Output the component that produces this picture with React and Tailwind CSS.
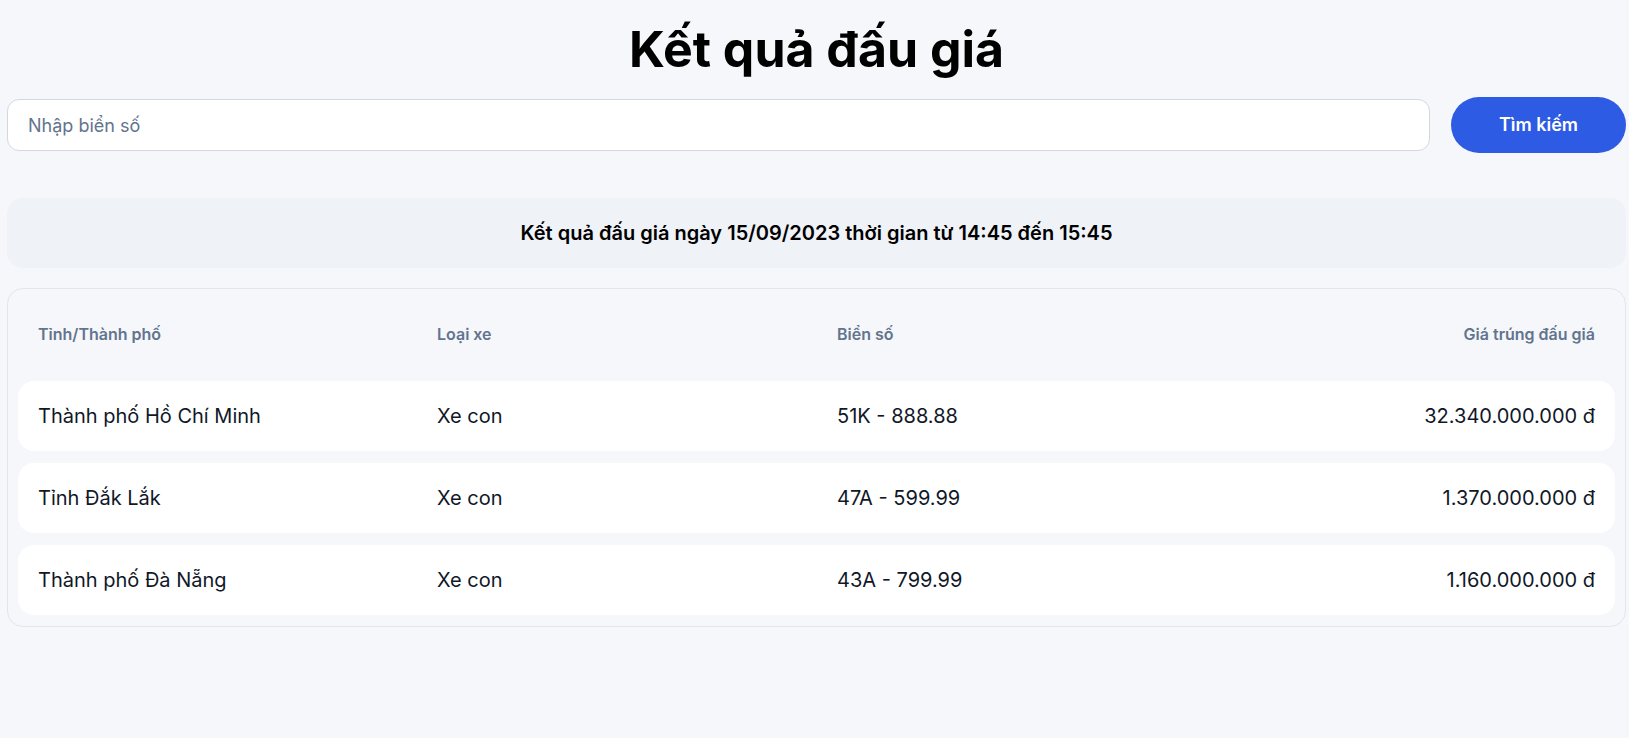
import React from 'react';

const rows = [
	{ city: 'Thành phố Hồ Chí Minh', type: 'Xe con', plate: '51K - 888.88', price: '32.340.000.000 đ' },
	{ city: 'Tỉnh Đắk Lắk', type: 'Xe con', plate: '47A - 599.99', price: '1.370.000.000 đ' },
	{ city: 'Thành phố Đà Nẵng', type: 'Xe con', plate: '43A - 799.99', price: '1.160.000.000 đ' },
];

function Row( { cells, header } ) {
	return (
		<div
			className={
				header
					? 'grid grid-cols-[399px_400px_1fr_1fr] items-center h-[70px] px-5 text-base font-semibold text-slate-500'
					: 'grid grid-cols-[399px_400px_1fr_1fr] items-center h-[70px] px-5 rounded-2xl bg-white text-xl text-gray-900'
			}
		>
			<div>{ cells[ 0 ] }</div>
			<div>{ cells[ 1 ] }</div>
			<div>{ cells[ 2 ] }</div>
			<div className="text-right">{ cells[ 3 ] }</div>
		</div>
	);
}

export default function App() {
	return (
		<div className="min-h-screen bg-[#f6f7fb] pl-[7px] pr-[3px] pt-[24px] pb-10 font-['Inter',sans-serif] text-black">
			<h1 className="text-center text-[50px] font-bold leading-none">Kết quả đấu giá</h1>

			<div className="mt-[23px] flex items-center gap-[21px]">
				<input
					type="text"
					placeholder="Nhập biển số"
					className="h-[52px] flex-1 rounded-xl border border-[#d4d7e0] bg-white px-5 text-lg text-gray-900 outline-none placeholder:text-slate-500"
				/>
				<button className="h-14 w-[175px] rounded-full bg-[#2d5be3] text-lg font-semibold text-white">
					Tìm kiếm
				</button>
			</div>

			<div className="mt-[45px] flex h-[70px] items-center justify-center rounded-2xl bg-[#eff2f7] text-xl font-semibold">
				Kết quả đấu giá ngày 15/09/2023 thời gian từ 14:45 đến 15:45
			</div>

			<div className="mt-5 flex flex-col gap-3 rounded-2xl border border-[#e2e5ec] p-[10px] pb-[11px]">
				<Row header cells={ [ 'Tỉnh/Thành phố', 'Loại xe', 'Biển số', 'Giá trúng đấu giá' ] } />
				{ rows.map( ( r ) => (
					<Row key={ r.plate } cells={ [ r.city, r.type, r.plate, r.price ] } />
				) ) }
			</div>
		</div>
	);
}
